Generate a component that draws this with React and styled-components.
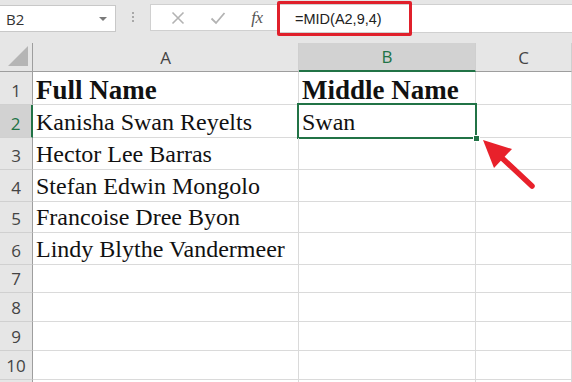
import React from "react";
import styled, { createGlobalStyle, css } from "styled-components";

const GREEN = "#217346";

const columns = [
  { key: "A", selected: false },
  { key: "B", selected: true },
  { key: "C", selected: false },
];

// the last row only peeks in at the bottom edge, so it gets no label
const rowHeights = [33, 33, 32, 32, 31, 32, 28, 29, 29, 29, 29];
const visibleRows = 10;

const data = [
  ["Full Name", "Middle Name", ""],
  ["Kanisha Swan Reyelts", "Swan", ""],
  ["Hector Lee Barras", "", ""],
  ["Stefan Edwin Mongolo", "", ""],
  ["Francoise Dree Byon", "", ""],
  ["Lindy Blythe Vandermeer", "", ""],
];

const App = () => {
  return (
    <>
      <GlobalStyle />
      <Window>
        <Toolbar>
          <NameBox>
            <span>B2</span>
            <Caret />
          </NameBox>
          <Grip>
            <i />
            <i />
            <i />
          </Grip>
          <IconBox>
            <svg width="14" height="14" viewBox="0 0 14 14">
              <path d="M1.5 1.5 L12.5 12.5 M12.5 1.5 L1.5 12.5" stroke="#b3b3b3" strokeWidth="1.6" fill="none" />
            </svg>
            <svg width="16" height="14" viewBox="0 0 16 14">
              <path d="M1.5 7.5 L6 12 L14.5 2" stroke="#b3b3b3" strokeWidth="1.8" fill="none" />
            </svg>
            <Fx>fx</Fx>
          </IconBox>
          <FormulaBar>
            <FormulaText>=MID(A2,9,4)</FormulaText>
            <Highlight />
          </FormulaBar>
        </Toolbar>

        <Sheet>
          <Corner>
            <svg width="22" height="21" viewBox="0 0 22 21">
              <polygon points="1,20 21,20 21,0" fill="#b5b5b5" />
            </svg>
          </Corner>
          {columns.map((c) => (
            <ColHead key={c.key} selected={c.selected}>
              {c.key}
            </ColHead>
          ))}

          {rowHeights.map((h, r) => (
            <React.Fragment key={r}>
              <RowHead h={h} selected={r === 1}>
                {r < visibleRows ? r + 1 : ""}
              </RowHead>
              {columns.map((c, ci) => {
                const value = (data[r] && data[r][ci]) || "";
                return (
                  <Cell key={c.key} h={h} bold={r === 0} active={r === 1 && ci === 1}>
                    {value}
                    {r === 1 && ci === 1 && <Handle />}
                  </Cell>
                );
              })}
            </React.Fragment>
          ))}
        </Sheet>

        <Arrow width="572" height="382" viewBox="0 0 572 382">
          <line x1="502" y1="158" x2="532" y2="186" stroke="#e8212b" strokeWidth="5.5" strokeLinecap="round" />
          <polygon points="483,140 512,149 494,168" fill="#e8212b" />
        </Arrow>
      </Window>
    </>
  );
};

const GlobalStyle = createGlobalStyle`
  body {
    margin: 0;
    background: #ffffff;
    overflow: hidden;
  }
`;

const Window = styled.div`
  position: relative;
  width: 572px;
  height: 382px;
  overflow: hidden;
  background: #e6e6e6;
  font-family: "Open Sans", "Liberation Sans", sans-serif;
`;

const Toolbar = styled.div`
  display: flex;
  align-items: flex-start;
  height: 43px;
  padding-top: 4px;
  box-sizing: border-box;
`;

const NameBox = styled.div`
  display: flex;
  align-items: center;
  justify-content: space-between;
  width: 117px;
  height: 27px;
  margin: 1px 0 0 -1px;
  padding: 0 8px 0 6px;
  box-sizing: border-box;
  background: #fff;
  border: 1px solid #c8c8c8;
  font-size: 15px;
  color: #333;
`;

const Caret = styled.span`
  width: 0;
  height: 0;
  border-left: 4px solid transparent;
  border-right: 4px solid transparent;
  border-top: 4px solid #7a7a7a;
`;

const Grip = styled.div`
  display: flex;
  flex-direction: column;
  gap: 2px;
  width: 34px;
  align-items: center;
  padding-top: 8px;

  i {
    width: 2px;
    height: 2px;
    background: #a8a8a8;
  }
`;

const IconBox = styled.div`
  display: flex;
  align-items: center;
  justify-content: space-around;
  width: 130px;
  height: 27px;
  padding: 0 4px 0 8px;
  box-sizing: border-box;
  background: #fff;
  border: 1px solid #d0d0d0;
`;

const Fx = styled.span`
  font-family: "Liberation Serif", serif;
  font-style: italic;
  font-size: 17px;
  color: #555;
  letter-spacing: -0.5px;
`;

const FormulaBar = styled.div`
  position: relative;
  flex: 1;
  height: 27px;
  display: flex;
  align-items: center;
  padding-left: 15px;
  background: #fff;
  border-top: 1px solid #d0d0d0;
  border-bottom: 1px solid #d0d0d0;
`;

const FormulaText = styled.span`
  font-family: "Liberation Sans", Arial, sans-serif;
  font-size: 14.5px;
  color: #222;
`;

const Highlight = styled.div`
  position: absolute;
  left: -3px;
  top: -4px;
  width: 135px;
  height: 35px;
  box-sizing: border-box;
  border: 3px solid #e0202b;
  border-radius: 2px;
`;

const Sheet = styled.div`
  display: grid;
  grid-template-columns: 33px 266px 177px 1fr;
  grid-auto-rows: auto;
  background: #fff;
`;

const headBase = css`
  display: flex;
  justify-content: center;
  box-sizing: border-box;
  background: #e6e6e6;
  font-size: 17px;
  color: #444;
`;

const Corner = styled.div`
  ${headBase};
  height: 29px;
  align-items: flex-end;
  justify-content: flex-start;
  padding: 0 0 4px 7px;
  border-right: 1px solid #9e9e9e;
  border-bottom: 1px solid #9e9e9e;
`;

const ColHead = styled.div`
  ${headBase};
  height: 29px;
  align-items: center;
  border-right: 1px solid #cfcfcf;
  border-bottom: 1px solid #9e9e9e;
  ${(p) =>
    p.selected &&
    css`
      background: #d2d2d2;
      color: ${GREEN};
      border-bottom: 2px solid ${GREEN};
    `}
`;

const RowHead = styled.div`
  ${headBase};
  height: ${(p) => p.h}px;
  align-items: flex-end;
  padding-bottom: 2px;
  border-right: 1px solid #9e9e9e;
  border-bottom: 1px solid #d0d0d0;
  ${(p) =>
    p.selected &&
    css`
      background: #d2d2d2;
      color: ${GREEN};
      border-right: 2px solid ${GREEN};
    `}
`;

const Cell = styled.div`
  position: relative;
  display: flex;
  align-items: flex-end;
  height: ${(p) => p.h}px;
  box-sizing: border-box;
  padding: 0 0 0 3px;
  border-right: 1px solid #dadada;
  border-bottom: 1px solid #dadada;
  font-family: "Liberation Serif", "Times New Roman", serif;
  font-size: ${(p) => (p.bold ? "27px" : "24px")};
  font-weight: ${(p) => (p.bold ? 700 : 400)};
  line-height: ${(p) => (p.bold ? 1.0 : 1.15)};
  color: #111;
  white-space: nowrap;

  ${(p) =>
    p.active &&
    css`
      &::after {
        content: "";
        position: absolute;
        left: -2px;
        top: -2px;
        right: -2px;
        bottom: -2px;
        border: 2px solid ${GREEN};
        pointer-events: none;
      }
    `}
`;

const Handle = styled.span`
  position: absolute;
  right: -5px;
  bottom: -5px;
  width: 5px;
  height: 5px;
  background: ${GREEN};
  border: 1px solid #fff;
  z-index: 2;
`;

const Arrow = styled.svg`
  position: absolute;
  left: 0;
  top: 0;
  pointer-events: none;
`;

export default App;
